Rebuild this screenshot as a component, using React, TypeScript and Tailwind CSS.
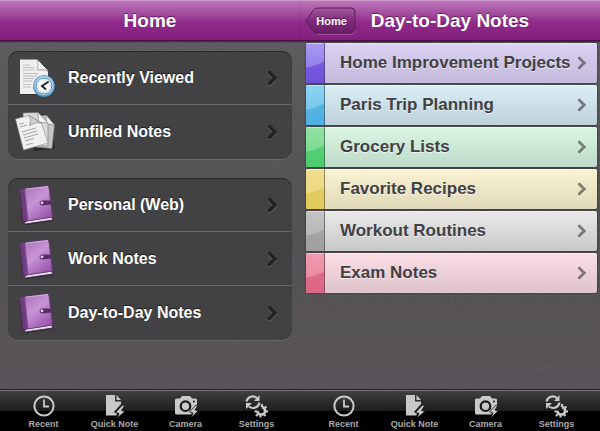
import { ReactNode } from "react";

const notebooks = ["Personal (Web)", "Work Notes", "Day-to-Day Notes"];

const categories = [
  {
    name: "Home Improvement Projects",
    row: "from-[#dcd3f3] to-[#c3b9dc]",
    tab: "from-[#ac9bf3] to-[#8069e2]",
    shade: "#6543d6",
  },
  {
    name: "Paris Trip Planning",
    row: "from-[#dceff6] to-[#bdd1da]",
    tab: "from-[#8ed4f0] to-[#64bfe8]",
    shade: "#42a9dd",
  },
  {
    name: "Grocery Lists",
    row: "from-[#dcf6e4] to-[#bddaca]",
    tab: "from-[#94e2a5] to-[#68d582]",
    shade: "#3fc866",
  },
  {
    name: "Favorite Recipes",
    row: "from-[#fbf4d3] to-[#dfd9b9]",
    tab: "from-[#f0df91] to-[#ead574]",
    shade: "#dfc34f",
  },
  {
    name: "Workout Routines",
    row: "from-[#eaeaea] to-[#c8c8c8]",
    tab: "from-[#c4c4c4] to-[#b0b0b0]",
    shade: "#989898",
  },
  {
    name: "Exam Notes",
    row: "from-[#fadde5] to-[#dfc3cb]",
    tab: "from-[#ef9bb0] to-[#e4809a]",
    shade: "#d9587c",
  },
];

export default function App() {
  return (
    <div className="grid min-h-screen grid-cols-2 font-['Liberation_Sans',Arial,sans-serif] font-bold">
      <Screen title="Home">
        <div className="flex flex-col gap-[19px] px-2 pt-2.5">
          <Card>
            <CardRow label="Recently Viewed" icon={<RecentDocIcon />} />
            <CardRow label="Unfiled Notes" icon={<PapersIcon />} />
          </Card>
          <Card>
            {notebooks.map((name) => (
              <CardRow key={name} label={name} icon={<NotebookIcon />} />
            ))}
          </Card>
        </div>
      </Screen>
      <Screen title="Day-to-Day Notes" back="Home">
        <ul className="flex flex-col gap-0.5 pt-0.5 pr-[3px] pl-1.5">
          {categories.map((category) => (
            <li key={category.name}>
              <button
                className={`flex h-10 w-full items-center overflow-hidden rounded-xs bg-linear-to-b pr-2.5 text-left shadow-[0_0_2px_#222,inset_0_1px_0_rgba(255,255,255,0.5)] ${category.row}`}
              >
                <span
                  className={`mr-[15px] h-full w-[19px] shrink-0 border-r border-black/40 bg-linear-to-b shadow-[inset_0_1px_0_rgba(255,255,255,0.4)] ${category.tab}`}
                >
                  <svg viewBox="0 0 18 39" className="h-full w-full" preserveAspectRatio="none">
                    <path d="M0 24C7 23 13 21 18 18V39H0Z" fill={category.shade} opacity=".65" />
                  </svg>
                </span>
                <span className="grow text-[17px] leading-5 whitespace-nowrap text-[#414043] [text-shadow:0_1px_0_rgba(255,255,255,0.6)]">
                  {category.name}
                </span>
                <Chevron className="h-3.5 w-2.5 text-black/45" />
              </button>
            </li>
          ))}
        </ul>
      </Screen>
    </div>
  );
}

function Screen({ title, back, children }: { title: string; back?: string; children: ReactNode }) {
  return (
    <section className="relative isolate flex min-w-0 flex-col bg-linear-to-b from-[#5a595c] via-[#4e4d50] to-[#554f54]">
      <Grain />
      <header className="grid h-[41px] grid-cols-[1fr_auto_1fr] items-center border-t border-b border-t-[#cf9acb] border-b-[#4b0f49] bg-linear-to-b from-[#bd76b9] via-[#902a8b] via-55% to-[#83207e] shadow-[0_1px_1px_rgba(0,0,0,0.4)]">
        <div className="pl-[5px]">{back && <BackButton label={back} />}</div>
        <h1 className="text-[19px] leading-6 whitespace-nowrap text-white [text-shadow:0_-1px_1px_rgba(60,0,60,0.6)]">
          {title}
        </h1>
      </header>
      <main className="grow">{children}</main>
      <TabBar />
    </section>
  );
}

function Grain() {
  return (
    <svg className="absolute inset-0 -z-10 h-full w-full opacity-10" aria-hidden="true">
      <filter id="grain">
        <feTurbulence type="fractalNoise" baseFrequency="0.6" numOctaves="2" />
        <feColorMatrix type="saturate" values="0" />
      </filter>
      <rect width="100%" height="100%" filter="url(#grain)" />
    </svg>
  );
}

function BackButton({ label }: { label: string }) {
  return (
    <button className="relative isolate flex h-7 w-[51px] items-center justify-center pl-0.5 text-[11px] leading-4 text-white [text-shadow:0_-1px_0_rgba(40,0,40,0.6)]">
      <svg viewBox="0 0 51 28" className="absolute inset-0 -z-10 h-full w-full" aria-hidden="true">
        <defs>
          <linearGradient id="back" x1="0" y1="0" x2="0" y2="1">
            <stop offset="0" stopColor="#a1589d" />
            <stop offset=".5" stopColor="#7f2b7b" />
            <stop offset="1" stopColor="#6b1e67" />
          </linearGradient>
        </defs>
        <path
          d="M1 14 8 3.5Q10 1 13 1H46Q50 1 50 5V22Q50 26 46 26H13Q10 26 8 24Z"
          fill="url(#back)"
          stroke="#5b1c58"
        />
        <path d="M12 27.5H46Q50 27 50.5 23" fill="none" stroke="#c27bbe" strokeOpacity=".5" />
      </svg>
      {label}
    </button>
  );
}

function Card({ children }: { children: ReactNode }) {
  return (
    <div className="divide-y divide-[#686769] overflow-hidden rounded-[10px] bg-[#403f41]/90 shadow-[inset_0_1px_1px_#29282a,0_1px_0_rgba(255,255,255,0.1)]">
      {children}
    </div>
  );
}

function CardRow({ label, icon }: { label: string; icon: ReactNode }) {
  return (
    <button className="flex h-[54px] w-full items-center gap-2.5 pr-3.5 pl-1.5 text-left">
      {icon}
      <span className="grow text-base leading-5 whitespace-nowrap text-white [text-shadow:0_-1px_1px_rgba(0,0,0,0.6)]">
        {label}
      </span>
      <Chevron className="h-4 w-[11px] text-[#222123]" />
    </button>
  );
}

function Chevron({ className }: { className: string }) {
  return (
    <svg viewBox="0 0 11 16" className={`shrink-0 ${className}`} fill="none" aria-hidden="true">
      <path
        d="M2.5 2.5 8 8 2.5 13.5"
        transform="translate(0 1)"
        stroke="#fff"
        strokeOpacity=".2"
        strokeWidth="3.4"
        strokeLinecap="round"
      />
      <path d="M2.5 2.5 8 8 2.5 13.5" stroke="currentColor" strokeWidth="3.4" strokeLinecap="round" />
    </svg>
  );
}

function RecentDocIcon() {
  return (
    <svg viewBox="0 0 44 44" className="size-11 shrink-0" aria-hidden="true">
      <path d="M7 4H23L34 15V39H7Z" fill="#171718" opacity=".5" />
      <path d="M6 3.5H23L34 15V38H6Z" fill="#efefef" />
      <path d="M23 3.5Q26 9 23.5 14.5Q29 13 34 15.5Z" fill="#c2c2c2" />
      <path d="M23 3.5Q25 8 23.5 14Q29 12.5 34 15" fill="#fafafa" stroke="#8b8b8b" strokeWidth=".7" />
      <path
        d="M9 9H16M9 11.5H20M9 14H20M9 17.5H24M9 20H23M9 22.5H20M9 25H18M9 28.5H17M9 31H17"
        stroke="#b4b4b4"
        strokeWidth=".8"
      />
      <circle cx="30.5" cy="30.5" r="11" fill="#25485f" />
      <circle cx="30" cy="30" r="10.8" fill="#5f9dc8" />
      <circle cx="30" cy="29.5" r="9.7" fill="#a9d0e8" />
      <circle cx="30" cy="30" r="7.8" fill="#f8fbfd" stroke="#4d86ad" strokeWidth=".8" />
      <circle cx="30" cy="30" r="6.2" fill="none" stroke="#8da4b4" strokeDasharray="1 2.25" />
      <path d="M34 26 28 30 31.5 33" stroke="#222" strokeWidth="1.9" fill="none" strokeLinecap="round" />
    </svg>
  );
}

function PapersIcon() {
  return (
    <svg viewBox="0 0 44 44" className="size-11 shrink-0" aria-hidden="true">
      <path d="M15 6 31 4 37 13 41 39 20 41Z" fill="#1a1a1a" opacity=".55" />
      <path d="M19 7 32 5 40.5 15 38 38.5 21 37Z" fill="#c4c4c4" stroke="#777" strokeWidth=".6" />
      <path d="M32 5 32.5 14 40.5 15Z" fill="#f1f1f1" stroke="#777" strokeWidth=".6" />
      <path d="M9 3 24 2.5 34 13 34 36H11Z" fill="#dadada" stroke="#777" strokeWidth=".6" />
      <path d="M24 2.5 24.5 12 34 13Z" fill="#f6f6f6" stroke="#777" strokeWidth=".6" />
      <path d="M1.5 9 15 5.5 27.5 13 34 33 9.5 40Z" fill="#f0f0f0" stroke="#888" strokeWidth=".6" />
      <path d="M15 5.5Q18 10 15.5 15.5Q22 11.5 27.5 13Z" fill="#cfcfcf" stroke="#777" strokeWidth=".6" />
      <path
        d="M5 14.5 10 13M6 17 13 15M8 22 22 18M9 25 23 21M10 28 24 24M11 31 20 28.5M12 35 19 33"
        stroke="#9a9a9a"
        strokeWidth=".9"
      />
    </svg>
  );
}

function NotebookIcon() {
  return (
    <svg viewBox="0 0 44 44" className="size-11 shrink-0" aria-hidden="true">
      <defs>
        <linearGradient id="cover" x1="0" y1="0" x2=".7" y2="1">
          <stop offset="0" stopColor="#a873b7" />
          <stop offset=".5" stopColor="#c894d6" />
          <stop offset="1" stopColor="#9953ad" />
        </linearGradient>
      </defs>
      <path d="M6 8 34 4 39 38 12 42 8 39Z" fill="#171319" opacity=".55" />
      <path d="M9 38.5 38 34 38.5 37 11 41Z" fill="#e6e0e7" stroke="#40254c" strokeWidth=".8" />
      <path d="M5.5 6.5 10 6 13.5 37.5 10.5 40.5 8.5 38Z" fill="#573063" />
      <path d="M9.5 6 32.5 3Q34.5 3 35 5L38.5 34 12.5 38Z" fill="url(#cover)" stroke="#693677" strokeWidth=".7" />
      <path d="M6 6.5 11 5.5 14.5 37.5 9.5 38.5Z" fill="#713e80" opacity=".85" />
      <path d="M12 6 34 3.5" stroke="#e6bfee" strokeWidth=".8" />
      <path d="M37 17.5 28 17.5Q25.5 18 25.5 20Q26 22.5 28.5 22.5L37.5 21.5Z" fill="#5a2c66" />
      <circle cx="28" cy="19.8" r="1.4" fill="#e8d7eb" />
    </svg>
  );
}

function TabBar() {
  return (
    <nav className="grid h-[41px] grid-cols-4 border-t border-[#777578] bg-linear-to-b from-[#404041] via-[#1c1c1d] via-50% to-black to-50% px-2 shadow-[0_-1px_0_#222]">
      <Tab label="Recent">
        <circle cx="12" cy="13" r="9.6" fill="none" stroke="currentColor" strokeWidth="2" />
        <path d="M12 6.5V13.5H17" fill="none" stroke="currentColor" strokeWidth="1.8" />
      </Tab>
      <Tab label="Quick Note">
        <path d="M3 2H12V8.5H18V11L11 19 14 20.5 13.5 22.5H3Z" fill="currentColor" />
        <path d="M13.5 2 18 7H13.5Z" fill="currentColor" />
        <path d="M19.5 12 12.5 19.5 16 20.5 14 25 22 18.5 18.5 17.5 21.5 13Z" fill="currentColor" stroke="#161616" strokeWidth=".8" />
      </Tab>
      <Tab label="Camera">
        <path d="M1 7Q1 5.5 2.5 5.5H6L8 3H16L18 5.5H21.5Q23 5.5 23 7V12L17 21.5H2.5Q1 21.5 1 20Z" fill="currentColor" />
        <circle cx="11.5" cy="13.2" r="4.8" fill="none" stroke="#181818" strokeWidth="2.2" />
        <circle cx="20" cy="8.5" r="1" fill="#181818" />
        <path d="M22 12 15.5 19 19 20 17 25 24 18 21 17 23.5 13Z" fill="currentColor" stroke="#161616" strokeWidth=".8" />
      </Tab>
      <Tab label="Settings">
        <path d="M1.5 8.5A6.5 6.5 0 0 1 12 5M14.5 9.5A6.5 6.5 0 0 1 4 13.5" fill="none" stroke="currentColor" strokeWidth="2.2" />
        <path d="M14.5 2V8H9ZM1 16V10H7Z" fill="currentColor" />
        <path d="M12.5 18A3.800 3.800 0 1 0 17 14" fill="none" stroke="currentColor" strokeWidth="2.6" />
        <path
          d="M17 14V11M19 15.500 21.500 13.500M20 18.500H23M18.500 21 20.500 23M15.500 22V24.500M13 21 11 23M12.500 18.500H9.500"
          stroke="currentColor"
          strokeWidth="2.2"
        />
      </Tab>
    </nav>
  );
}

function Tab({ label, children }: { label: string; children: ReactNode }) {
  return (
    <button className="flex flex-col items-center pt-0.5 text-[#a9a9a9]">
      <svg viewBox="0 0 24 25" className="h-[25px] w-6 text-[#c9c9c9]" aria-hidden="true">
        {children}
      </svg>
      <span className="text-[9px] leading-3 whitespace-nowrap">{label}</span>
    </button>
  );
}
